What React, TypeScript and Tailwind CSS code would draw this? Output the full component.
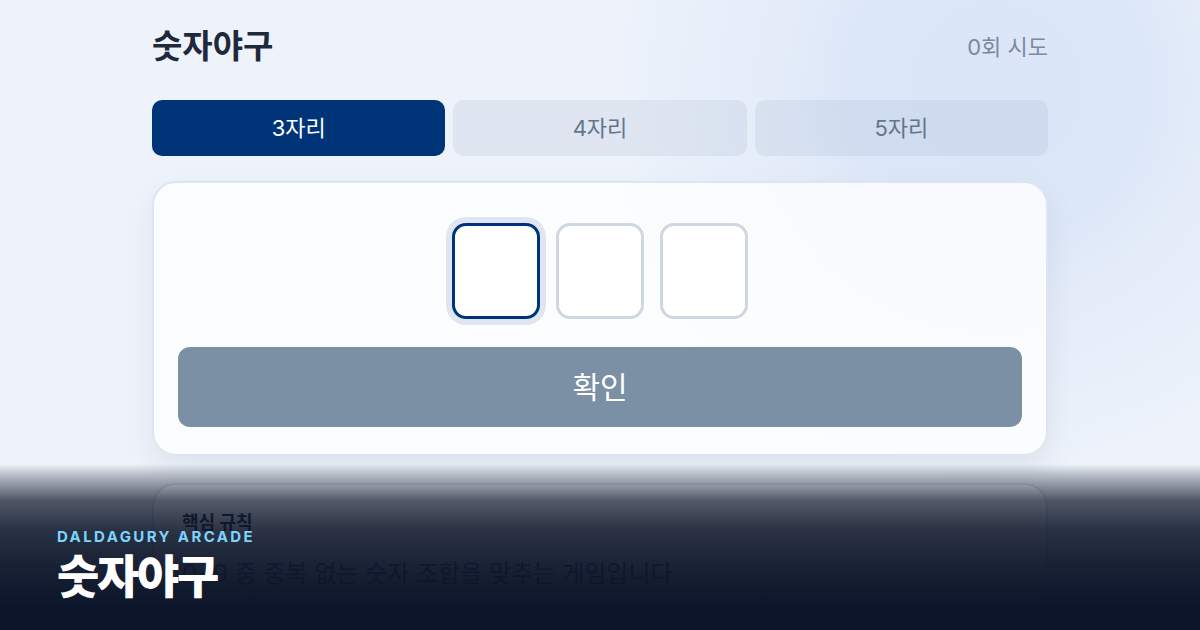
const font = 'font-["Inter","Noto_Sans_CJK_KR",sans-serif]';

const tabs = ['3자리', '4자리', '5자리'];

export default function App() {
  const active = 0;
  const digits = 3;

  return (
    <div
      className={`relative h-[630px] w-[1200px] overflow-hidden bg-[radial-gradient(circle_at_83%_14%,#dae5f7_0px,#dce7f8_150px,#e4ecf9_215px,#eef3fb_400px),linear-gradient(180deg,#eef3fb_0%,#e4edf9_80%)] ${font}`}
    >
      <div className="mx-auto w-[896px] pt-[23px]">
        <header className="flex h-[48px] items-center justify-between">
          <h1 className="text-[33px] font-bold text-[#1e293b]">숫자야구</h1>
          <span className="text-[22px] text-[#7b8a9c]">0회 시도</span>
        </header>

        <div className="mt-[29px] grid h-[56px] grid-cols-3 gap-2">
          {tabs.map((t, i) => (
            <button
              key={t}
              className={
                i === active
                  ? 'rounded-[10px] bg-[#003478] text-[22px] text-white'
                  : 'rounded-[10px] bg-slate-400/15 text-[22px] text-[#64748b]'
              }
            >
              {t}
            </button>
          ))}
        </div>

        <section className="mt-[25px] rounded-[24px] border-2 border-[#dbe5f3] bg-white/80 px-6 pb-[27px] pt-[40px] shadow-[0_14px_32px_rgba(15,23,42,0.07)]">
          <div className="flex justify-center gap-4">
            {Array.from({ length: digits }).map((_, i) => (
              <div
                key={i}
                className={
                  i === 0
                    ? 'h-[96px] w-[88px] rounded-[14px] border-[3px] border-[#003478] bg-white ring-[6px] ring-[#dfe6f1]'
                    : 'h-[96px] w-[88px] rounded-[14px] border-[3px] border-[#cfd8e2] bg-white'
                }
              />
            ))}
          </div>
          <button className="mt-[28px] h-[80px] w-full rounded-[12px] bg-[#7b90a5] text-[30px] text-white">
            확인
          </button>
        </section>

        <section className="mt-[27px] rounded-[24px] border-2 border-[#dbe5f3] bg-white/80 px-7 pb-8 pt-6">
          <h2 className="text-[18px] font-bold text-[#1e293b]">핵심 규칙</h2>
          <p className="mt-5 text-[24px] text-[#475569]">0~9 중 중복 없는 숫자 조합을 맞추는 게임입니다</p>
        </section>
      </div>

      <div className="absolute inset-x-0 bottom-0 h-[166px] bg-[linear-gradient(180deg,rgba(11,20,40,0)_0%,rgba(11,20,40,0.25)_7%,rgba(11,20,40,0.7)_22%,rgba(11,20,40,0.87)_40%,rgba(11,20,40,0.94)_62%,#0b1428_88%)]">
        <div className="flex h-full flex-col justify-end pb-[28px] pl-[57px]">
          <p className="text-[15px] font-bold leading-none tracking-[0.16em] text-[#7dd3fc]">DALDAGURY ARCADE</p>
          <p className="mt-[6px] text-[46px] font-extrabold leading-[52px] tracking-[-0.05em] text-white">숫자야구</p>
        </div>
      </div>
    </div>
  );
}
